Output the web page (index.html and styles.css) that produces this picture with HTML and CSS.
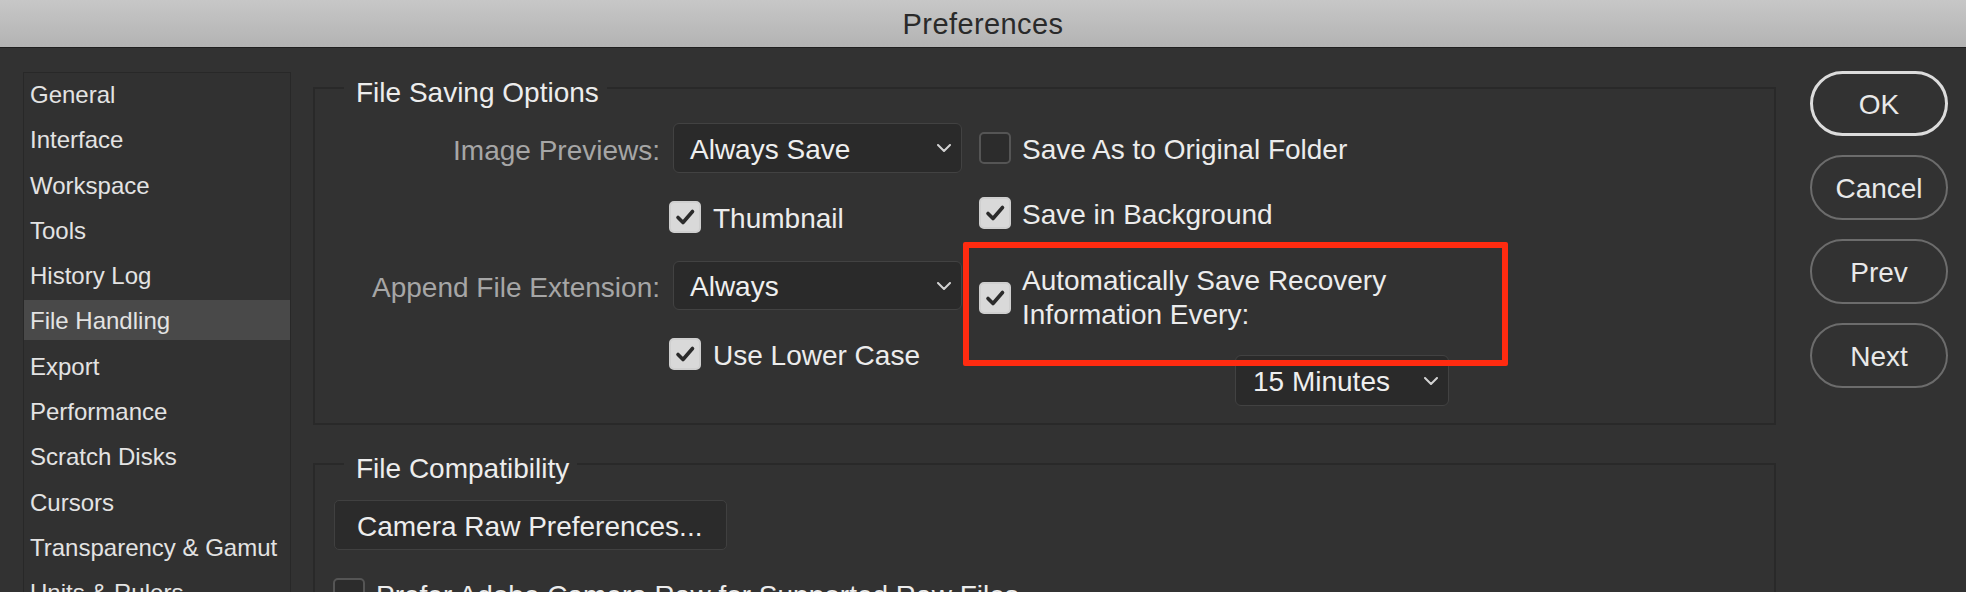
FILE: index.html
```html
<!DOCTYPE html>
<html lang="en">
<head>
<meta charset="utf-8">
<title>Preferences</title>
<link rel="stylesheet" href="styles.css">
</head>
<body>
<div class="window">
  <header class="titlebar">Preferences</header>
  <div class="content">
    <nav class="sidebar">
      <div class="item">General</div>
      <div class="item">Interface</div>
      <div class="item">Workspace</div>
      <div class="item">Tools</div>
      <div class="item">History Log</div>
      <div class="item active">File Handling</div>
      <div class="item">Export</div>
      <div class="item">Performance</div>
      <div class="item">Scratch Disks</div>
      <div class="item">Cursors</div>
      <div class="item">Transparency &amp; Gamut</div>
      <div class="item">Units &amp; Rulers</div>
    </nav>

    <main class="main">
      <fieldset class="group group-saving">
        <legend>File Saving Options</legend>
        <div class="saving-body">
          <div class="left-grid">
            <span class="label">Image Previews:</span>
            <div class="select wide"><span>Always Save</span><svg class="chev" viewBox="0 0 14 8" width="14" height="8"><path d="M1 1 L7 7 L13 1"/></svg></div>

            <span></span>
            <label class="cb-row shift"><span class="cb checked"><svg viewBox="0 0 32 32" width="32" height="32"><path d="M9 16.5 L14 21.5 L23.5 10.5"/></svg></span><span class="cb-text">Thumbnail</span></label>

            <span class="label">Append File Extension:</span>
            <div class="select wide"><span>Always</span><svg class="chev" viewBox="0 0 14 8" width="14" height="8"><path d="M1 1 L7 7 L13 1"/></svg></div>

            <span></span>
            <label class="cb-row shift"><span class="cb checked"><svg viewBox="0 0 32 32" width="32" height="32"><path d="M9 16.5 L14 21.5 L23.5 10.5"/></svg></span><span class="cb-text">Use Lower Case</span></label>
          </div>

          <div class="right-col">
            <label class="cb-row r1"><span class="cb"></span><span class="cb-text">Save As to Original Folder</span></label>
            <label class="cb-row r2"><span class="cb checked"><svg viewBox="0 0 32 32" width="32" height="32"><path d="M9 16.5 L14 21.5 L23.5 10.5"/></svg></span><span class="cb-text">Save in Background</span></label>
            <label class="cb-row autosave"><span class="cb checked"><svg viewBox="0 0 32 32" width="32" height="32"><path d="M9 16.5 L14 21.5 L23.5 10.5"/></svg></span><span class="cb-text two-line">Automatically Save Recovery Information Every:</span><span class="highlight"></span></label>
            <div class="select minutes"><span>15 Minutes</span><svg class="chev" viewBox="0 0 14 8" width="14" height="8"><path d="M1 1 L7 7 L13 1"/></svg></div>
          </div>
        </div>
      </fieldset>

      <fieldset class="group group-compat">
        <legend>File Compatibility</legend>
        <button class="btn-raw" type="button">Camera Raw Preferences...</button>
        <label class="cb-row prefer"><span class="cb"></span><span class="cb-text">Prefer Adobe Camera Raw for Supported Raw Files</span></label>
      </fieldset>
    </main>

    <aside class="buttons">
      <button class="pill ok" type="button">OK</button>
      <button class="pill" type="button">Cancel</button>
      <button class="pill" type="button">Prev</button>
      <button class="pill" type="button">Next</button>
    </aside>
  </div>
</div>
</body>
</html>
```

FILE: styles.css
```css
html, body {
  margin: 0;
  padding: 0;
}
body {
  background: #323232;
  font-family: "Liberation Sans", Arial, sans-serif;
  width: 1966px;
  height: 592px;
  overflow: hidden;
  color: #ebebeb;
}
.window {
  height: 592px;
  overflow: hidden;
}
.titlebar {
  box-sizing: border-box;
  height: 48px;
  padding-top: 2px;
  border-bottom: 1px solid #1f1f1f;
  background: linear-gradient(#c7c7c7, #b3b3b3);
  display: flex;
  align-items: center;
  justify-content: center;
  font-size: 29px;
  letter-spacing: 0.4px;
  color: #2a2a2a;
}
.content {
  display: flex;
  align-items: flex-start;
  padding: 20px 0 0 23px;
}

/* sidebar */
.sidebar {
  width: 268px;
  height: 560px;
  box-sizing: border-box;
  margin-top: 4px;
  margin-right: 22px;
  padding-top: 1px;
  border: 1px solid #282828;
  background: #313131;
  flex-shrink: 0;
}
.item {
  height: 40px;
  line-height: 42px;
  margin-bottom: 5.3px;
  padding-left: 6px;
  font-size: 24px;
  color: #e3e3e3;
  white-space: nowrap;
}
.item.active {
  background: #494949;
}

/* main */
.main {
  width: 1463px;
  flex-shrink: 0;
}
.group {
  margin: 0;
  width: 1463px;
  box-sizing: border-box;
  border: 2px solid #292929;
  min-inline-size: 0;
  padding: 0;
}
.group legend {
  margin-left: 29px;
  padding: 9px 8px 0 12px;
  line-height: 31px;
  font-size: 28px;
  color: #ededed;
}
.group-saving {
  padding: 15px 0 17px 0;
}
.group-compat {
  margin-top: 19px;
  padding: 16px 0 40px 0;
  height: 200px;
}
.saving-body {
  display: flex;
  align-items: flex-start;
}
.left-grid {
  display: grid;
  grid-template-columns: 345px 289px;
  grid-template-rows: 50px 32px 49px 32px;
  column-gap: 13px;
  row-gap: 28px;
}
.label {
  justify-self: end;
  align-self: center;
  padding-top: 5px;
  font-size: 28px;
  color: #a6a6a6;
  white-space: nowrap;
}
.select {
  box-sizing: border-box;
  display: flex;
  align-items: center;
  justify-content: space-between;
  padding: 3px 10px 0 16px;
  background: #2a2a2a;
  border: 1.5px solid #424242;
  border-radius: 6px;
  font-size: 28px;
  color: #efefef;
}
.select .chev {
  margin-top: -3px;
}
.select.wide {
  width: 289px;
  height: 100%;
}
.chev {
  fill: none;
  stroke: #d2d2d2;
  stroke-width: 2;
  stroke-linecap: round;
  stroke-linejoin: round;
}

/* checkboxes */
.cb-row {
  display: flex;
  align-items: center;
  gap: 11px;
  height: 32px;
  font-size: 28px;
  line-height: 32px;
  color: #ececec;
  white-space: nowrap;
}
.cb-text {
  padding-top: 3px;
}
.cb-row.shift {
  margin-left: -4px;
  gap: 12px;
}
.cb {
  width: 32px;
  height: 32px;
  box-sizing: border-box;
  border-radius: 5px;
  border: 2px solid #555555;
  background: #2c2c2c;
  flex-shrink: 0;
  display: flex;
  align-items: center;
  justify-content: center;
}
.cb.checked {
  background: #d9d9d9;
  border-color: #cfcfcf;
}
.cb svg {
  display: block;
  margin: -2px;
  fill: none;
  stroke: #2b2b2b;
  stroke-width: 3.6;
  stroke-linecap: round;
  stroke-linejoin: round;
}

.right-col {
  margin-left: 17px;
  display: flex;
  flex-direction: column;
  align-items: flex-start;
}
.r1 { margin-top: 9px; }
.r2 { margin-top: 33px; }
.autosave {
  height: auto;
  margin-top: 35px;
  position: relative;
}
.autosave .cb-text {
  padding-top: 0;
}
.two-line {
  white-space: normal;
  max-width: 420px;
  line-height: 34px;
}
.highlight {
  position: absolute;
  left: -16px;
  top: -22px;
  width: 545px;
  height: 124px;
  box-sizing: border-box;
  border: 6px solid #ff2b10;
  border-radius: 2px;
  pointer-events: none;
}
.select.minutes {
  margin-top: 23px;
  margin-left: 256px;
  width: 214px;
  height: 51px;
  padding-left: 17px;
}

/* file compatibility */
.btn-raw {
  display: block;
  margin-left: 19px;
  width: 393px;
  height: 50px;
  box-sizing: border-box;
  padding: 4px 0 0 22px;
  text-align: left;
  background: #2b2b2b;
  border: 1.5px solid #404040;
  border-radius: 5px;
  font-family: "Liberation Sans", Arial, sans-serif;
  font-size: 28px;
  color: #ededed;
}
.prefer {
  margin-top: 28px;
  margin-left: 18px;
}

/* right buttons */
.buttons {
  margin-left: 34px;
  margin-top: 3px;
  display: flex;
  flex-direction: column;
  gap: 19px;
}
.pill {
  width: 138px;
  height: 65px;
  box-sizing: border-box;
  border-radius: 33px;
  border: 2px solid #6c6c6c;
  background: transparent;
  font-family: "Liberation Sans", Arial, sans-serif;
  font-size: 28px;
  color: #e9e9e9;
  padding: 3px 0 0 0;
}
.pill.ok {
  border: 3px solid #dcdcdc;
}
```
